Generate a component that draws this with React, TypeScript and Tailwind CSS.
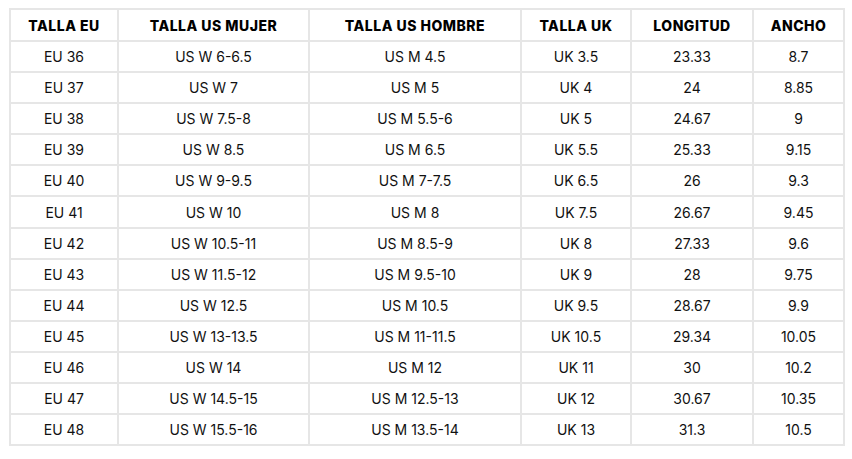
const headers = ["TALLA EU", "TALLA US MUJER", "TALLA US HOMBRE", "TALLA UK", "LONGITUD", "ANCHO"];

const widths = ["w-[108px]", "w-[191px]", "w-[212px]", "w-[110px]", "w-[122px]", "w-[91px]"];

const rows: string[][] = [
  ["EU 36", "US W 6-6.5", "US M 4.5", "UK 3.5", "23.33", "8.7"],
  ["EU 37", "US W 7", "US M 5", "UK 4", "24", "8.85"],
  ["EU 38", "US W 7.5-8", "US M 5.5-6", "UK 5", "24.67", "9"],
  ["EU 39", "US W 8.5", "US M 6.5", "UK 5.5", "25.33", "9.15"],
  ["EU 40", "US W 9-9.5", "US M 7-7.5", "UK 6.5", "26", "9.3"],
  ["EU 41", "US W 10", "US M 8", "UK 7.5", "26.67", "9.45"],
  ["EU 42", "US W 10.5-11", "US M 8.5-9", "UK 8", "27.33", "9.6"],
  ["EU 43", "US W 11.5-12", "US M 9.5-10", "UK 9", "28", "9.75"],
  ["EU 44", "US W 12.5", "US M 10.5", "UK 9.5", "28.67", "9.9"],
  ["EU 45", "US W 13-13.5", "US M 11-11.5", "UK 10.5", "29.34", "10.05"],
  ["EU 46", "US W 14", "US M 12", "UK 11", "30", "10.2"],
  ["EU 47", "US W 14.5-15", "US M 12.5-13", "UK 12", "30.67", "10.35"],
  ["EU 48", "US W 15.5-16", "US M 13.5-14", "UK 13", "31.3", "10.5"],
];

export default function App() {
  return (
    <div className="min-h-screen bg-white pl-[9px] pt-[8px] font-['Inter',sans-serif] text-[14px] text-[#111]">
      <table className="table-fixed border-collapse border-2 border-[#e6e6e6]">
        <colgroup>
          {widths.map((w, i) => (
            <col key={i} className={w} />
          ))}
        </colgroup>
        <thead>
          <tr>
            {headers.map((h) => (
              <th
                key={h}
                className="h-[32px] border-2 border-[#e6e6e6] p-0 text-center font-extrabold tracking-[0.5px] text-black"
              >
                {h}
              </th>
            ))}
          </tr>
        </thead>
        <tbody>
          {rows.map((r) => (
            <tr key={r[0]}>
              {r.map((c, i) => (
                <td key={i} className="h-[31.1px] border-2 border-[#e6e6e6] p-0 text-center">
                  {c}
                </td>
              ))}
            </tr>
          ))}
        </tbody>
      </table>
    </div>
  );
}
